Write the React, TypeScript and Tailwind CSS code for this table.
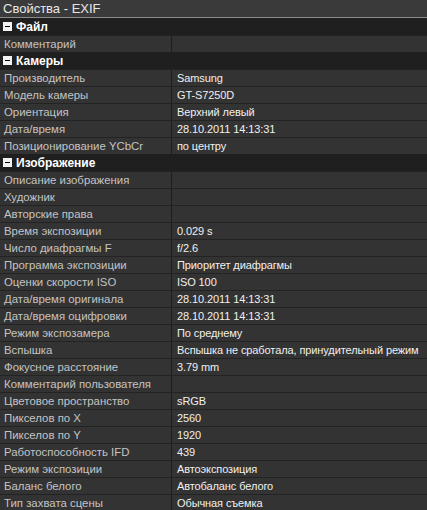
import { Fragment } from 'react'

type Row = { name: string; value?: string }
type Section = { title: string; rows: Row[] }

const sections: Section[] = [
  { title: 'Файл', rows: [{ name: 'Комментарий' }] },
  {
    title: 'Камеры',
    rows: [
      { name: 'Производитель', value: 'Samsung' },
      { name: 'Модель камеры', value: 'GT-S7250D' },
      { name: 'Ориентация', value: 'Верхний левый' },
      { name: 'Дата/время', value: '28.10.2011 14:13:31' },
      { name: 'Позиционирование YCbCr', value: 'по центру' },
    ],
  },
  {
    title: 'Изображение',
    rows: [
      { name: 'Описание изображения' },
      { name: 'Художник' },
      { name: 'Авторские права' },
      { name: 'Время экспозиции', value: '0.029 s' },
      { name: 'Число диафрагмы F', value: 'f/2.6' },
      { name: 'Программа экспозиции', value: 'Приоритет диафрагмы' },
      { name: 'Оценки скорости ISO', value: 'ISO 100' },
      { name: 'Дата/время оригинала', value: '28.10.2011 14:13:31' },
      { name: 'Дата/время оцифровки', value: '28.10.2011 14:13:31' },
      { name: 'Режим экспозамера', value: 'По среднему' },
      { name: 'Вспышка', value: 'Вспышка не сработала, принудительный режим' },
      { name: 'Фокусное расстояние', value: '3.79 mm' },
      { name: 'Комментарий пользователя' },
      { name: 'Цветовое пространство', value: 'sRGB' },
      { name: 'Пикселов по X', value: '2560' },
      { name: 'Пикселов по Y', value: '1920' },
      { name: 'Работоспособность IFD', value: '439' },
      { name: 'Режим экспозиции', value: 'Автоэкспозиция' },
      { name: 'Баланс белого', value: 'Автобаланс белого' },
      { name: 'Тип захвата сцены', value: 'Обычная съемка' },
    ],
  },
]

function Collapse() {
  return (
    <span className="flex h-[9px] w-[9px] shrink-0 items-center justify-center bg-[#f2f2f2]">
      <span className="h-[1px] w-[5px] bg-black" />
    </span>
  )
}

export default function App() {
  return (
    <div className="h-[510px] w-[427px] overflow-hidden bg-[#1f1f1f] font-['Liberation_Sans',Arial,sans-serif] text-[11.4px] leading-none">
      {/* Title */}
      <div className="flex h-[17px] items-center bg-[#3a3a3a] pl-[3px] text-[13px] text-[#e6e6e6]">Свойства - EXIF</div>
      <div className="h-px bg-[#8c8c8c]" />

      {sections.map((section) => (
        <Fragment key={section.title}>
          <div className="flex h-[17px] items-center gap-[4px] bg-[#1f1f1f] pl-[3px] text-[12px] font-bold text-white">
            <Collapse />
            <span>{section.title}</span>
          </div>
          {section.rows.map((row) => (
            <div key={row.name} className="grid h-[17px] grid-cols-[172px_1fr] border-t border-[#232323] bg-[#333333]">
              <div className="flex items-center border-r border-[#1e1e1e] pl-[4px] pt-px text-[#c4c4c4]">{row.name}</div>
              <div className="flex items-center whitespace-nowrap pl-[5px] pt-px text-[11px] tracking-[-0.1px] text-[#f0f0f0]">
                {row.value ?? ''}
              </div>
            </div>
          ))}
        </Fragment>
      ))}
    </div>
  )
}
